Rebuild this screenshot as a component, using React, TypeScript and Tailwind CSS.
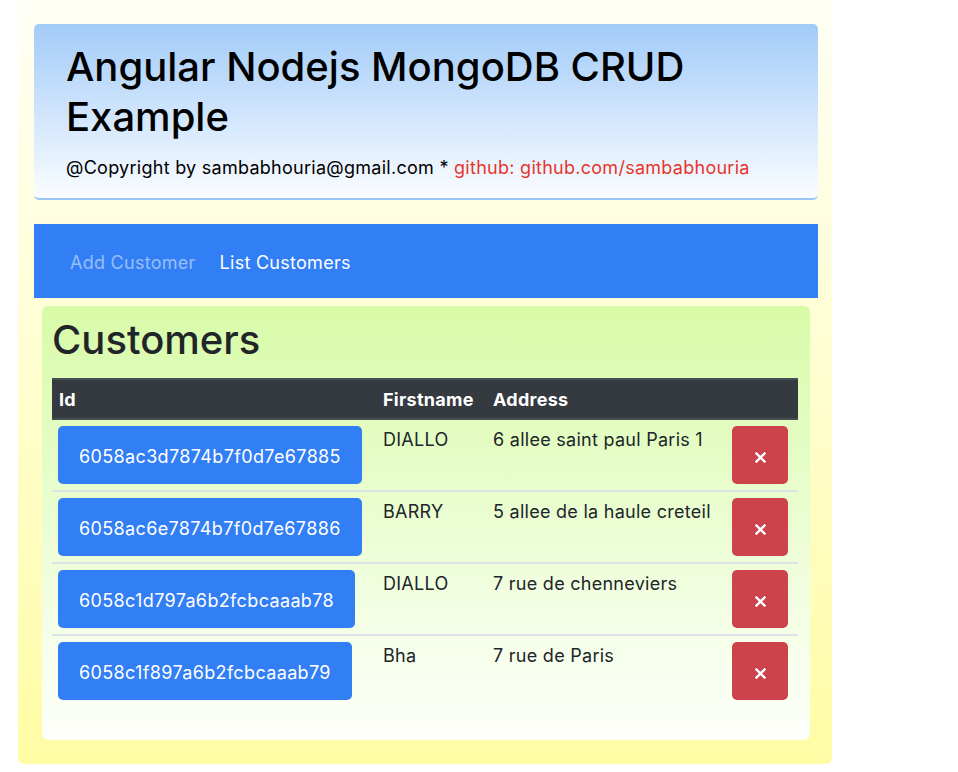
import React from "react";

interface Customer {
  id: string;
  firstname: string;
  address: string;
}

const customers: Customer[] = [
  { id: "6058ac3d7874b7f0d7e67885", firstname: "DIALLO", address: "6 allee saint paul Paris 1" },
  { id: "6058ac6e7874b7f0d7e67886", firstname: "BARRY", address: "5 allee de la haule creteil" },
  { id: "6058c1d797a6b2fcbcaaab78", firstname: "DIALLO", address: "7 rue de chenneviers" },
  { id: "6058c1f897a6b2fcbcaaab79", firstname: "Bha", address: "7 rue de Paris" },
];

const cols = "grid grid-cols-[324px_110px_239px_73px]";

const App: React.FC = () => {
  return (
    <div className="min-h-[772px] bg-white font-['Inter','Liberation_Sans',sans-serif]">
      <div className="ml-[18px] w-[814px] rounded-b-[6px] bg-gradient-to-b from-[#fffff6] to-[#fffca4] pt-6 pr-[14px] pb-6 pl-4">
        {/* jumbotron */}
        <div className="rounded-[5px] border-b-2 border-[#9cc6f6] bg-gradient-to-b from-[#a2cbf8] to-[#fbfdff] px-8 pt-[18px] pb-[17px] text-black">
          <h1 className="text-[40px] leading-[50px] font-medium">Angular Nodejs MongoDB CRUD Example</h1>
          <p className="mt-3 text-[18px] leading-[27px] tracking-[0.015em]">
            @Copyright by sambabhouria@gmail.com *{" "}
            <span className="text-[#e8352b]">github: github.com/sambabhouria</span>
          </p>
        </div>

        {/* nav */}
        <nav className="mt-6 flex h-[74px] items-center gap-6 bg-[#317ef5] pt-[2px] pl-9 text-[18px] tracking-[0.015em]">
          <a className="text-white/50">Add Customer</a>
          <a className="text-white">List Customers</a>
        </nav>

        {/* customers card */}
        <div className="mx-2 mt-2 rounded-[6px] bg-gradient-to-b from-[#d8fba8] to-[#fefffb] px-[10px] pt-[10px] pb-8 text-[#212529]">
          <h2 className="text-[40px] leading-[48px] font-medium">Customers</h2>
          <div className="mt-[14px] w-[746px]">
            <div className={`${cols} h-[42px] items-center border-y-2 border-[#454d55] bg-[#343a40] text-[18px] tracking-[0.015em] font-bold text-white`}>
              <div className="pl-[7px]">Id</div>
              <div className="pl-[7px]">Firstname</div>
              <div className="pl-[7px]">Address</div>
              <div />
            </div>
            {customers.map((c, i) => (
              <div
                key={c.id}
                className={`${cols} h-[72px] text-[18px] leading-[27px] tracking-[0.015em] ${i < customers.length - 1 ? "border-b-2 border-[#dee2e6]" : ""}`}
              >
                <div className="pt-[6px] pl-[6px]">
                  <button className="h-[58px] rounded-[5px] bg-[#317ef5] px-[21px] pt-[3px] text-[18px] tracking-[0.02em] text-white">
                    {c.id}
                  </button>
                </div>
                <div className="pt-[6px] pl-[7px]">{c.firstname}</div>
                <div className="pt-[6px] pl-[7px]">{c.address}</div>
                <div className="pt-[6px] pl-[7px]">
                  <button className="flex h-[58px] w-[56px] items-center justify-center rounded-[5px] bg-[#cc434b] pt-[4px]">
                    <svg width="11" height="11" viewBox="0 0 11 11">
                      <path d="M1.5 1.5 L9.5 9.5 M9.5 1.5 L1.5 9.5" stroke="white" strokeWidth="2.4" strokeLinecap="square" />
                    </svg>
                  </button>
                </div>
              </div>
            ))}
          </div>
        </div>
      </div>
    </div>
  );
};

export default App;
